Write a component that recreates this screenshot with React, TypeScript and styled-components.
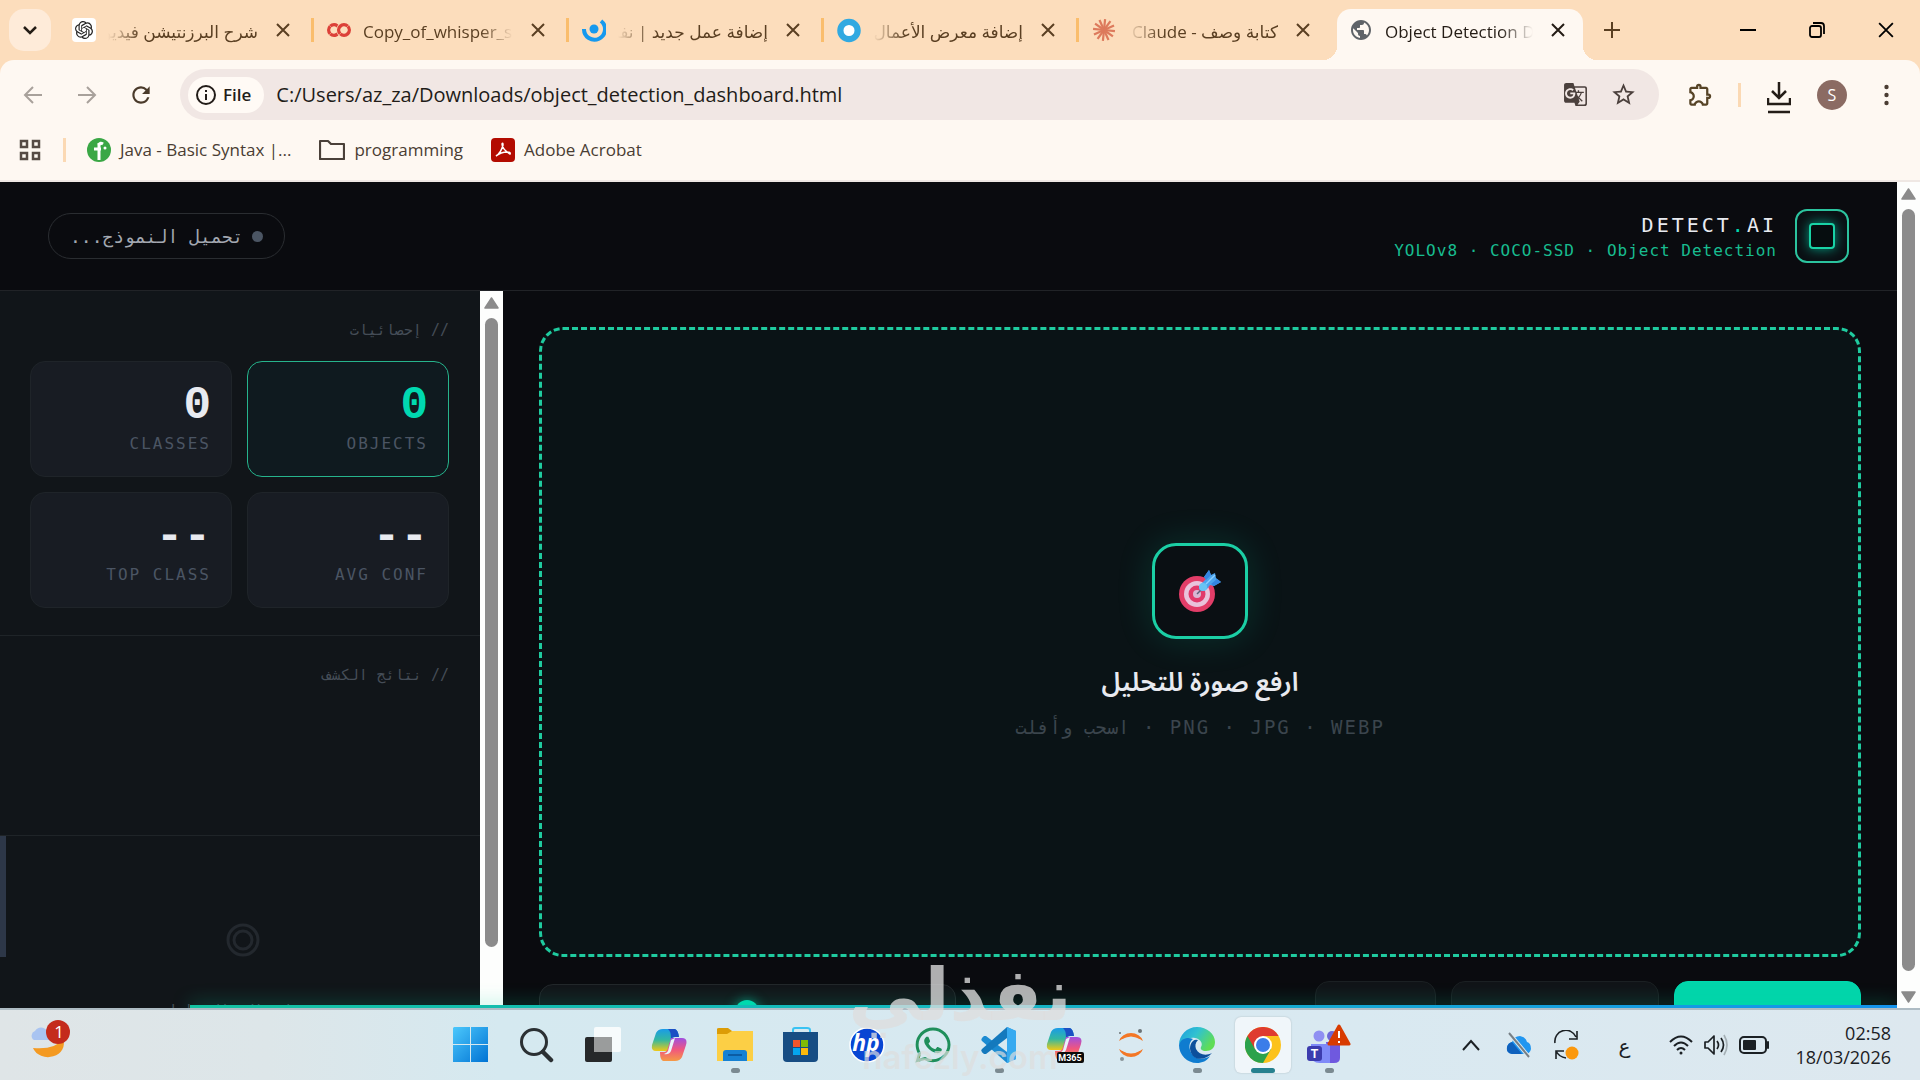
import React from 'react';
import styled, { createGlobalStyle, css } from 'styled-components';
import { SiOpenai, SiGooglecolab } from 'react-icons/si';
import { FaWhatsapp } from 'react-icons/fa';
import { MdGTranslate, MdStarBorder, MdOutlineExtension, MdPublic, MdRefresh } from 'react-icons/md';

const UI = '"Open Sans", "Noto Sans", "DejaVu Sans", sans-serif';
const MONO = '"DejaVu Sans Mono", "Liberation Mono", monospace';
const TEAL = '#00d9b0';

const GlobalStyle = createGlobalStyle`
  *, *::before, *::after { box-sizing: border-box; }
  body { margin: 0; font-family: ${UI}; overflow: hidden; }
  button { border: 0; padding: 0; background: none; font: inherit; color: inherit; cursor: pointer; }
  a { color: inherit; text-decoration: none; }
  h1, h2, p { margin: 0; font-weight: 400; }
  svg { display: block; flex: none; }
`;

const Screen = styled.div`
  height: 100vh;
  display: flex;
  flex-direction: column;
`;

/* ---------- browser chrome ---------- */

const TabStrip = styled.div`
  height: 60px;
  flex: none;
  display: flex;
  align-items: center;
  background: #fcddbc;
  padding-left: 9px;
`;

const TabSearch = styled.button`
  width: 42px;
  height: 42px;
  border-radius: 15px;
  background: #feebd9;
  display: grid;
  place-items: center;
  margin-right: 6px;
`;

const Tab = styled.div<{ $active?: boolean }>`
  width: 255px;
  height: 51px;
  align-self: flex-end;
  display: flex;
  align-items: center;
  padding: 0 19px 9px 15px;
  color: #5a3f22;
  position: relative;
  &::after {
    content: '';
    position: absolute;
    right: -2px;
    top: 9px;
    width: 3px;
    height: 24px;
    background: #fabd6c;
  }
  &:nth-last-child(4)::after { display: none; }
  ${p => p.$active && css`
    width: 246px;
    margin-left: 5px;
    padding: 0 15px 9px 12px;
    border-radius: 14px 14px 0 0;
    background: #fef8f2;
    color: #241c15;
    &::before, &::after {
      content: '';
      position: absolute;
      top: auto;
      bottom: 0;
      width: 14px;
      height: 14px;
      background: radial-gradient(circle at 0 0, transparent 14px, #fef8f2 14px);
    }
    &::before { left: -14px; }
    &::after { right: -14px; background: radial-gradient(circle at 100% 0, transparent 14px, #fef8f2 14px); }
  `}
`;

const TabTitle = styled.span<{ $rtl?: boolean }>`
  flex: 1;
  min-width: 0;
  margin: 0 15px 0 12px;
  padding-top: 3px;
  overflow: hidden;
  white-space: nowrap;
  font-size: 17px;
  line-height: 28px;
  direction: ${p => (p.$rtl ? 'rtl' : 'ltr')};
  mask-image: linear-gradient(${p => (p.$rtl ? 'to left' : 'to right')}, #000 78%, transparent);
`;

const Plain = styled.button`
  display: grid;
  place-items: center;
  flex: none;
`;

const NewTab = styled(Plain)`
  margin-left: 14px;
  width: 30px;
  height: 30px;
`;

const WindowControls = styled.div`
  margin-left: auto;
  display: flex;
  ${Plain} { width: 69px; height: 48px; }
`;

const ToolbarBack = styled.div`
  flex: none;
  background: #fcddbc;
`;

const Toolbar = styled.div`
  height: 69px;
  display: flex;
  align-items: center;
  background: #fef8f2;
  border-radius: 14px 14px 0 0;
  padding: 0 31px 0 18px;
`;

const NavButtons = styled.div`
  display: flex;
  gap: 24px;
  width: 162px;
  ${Plain} { width: 30px; height: 30px; }
`;

const Omnibox = styled.div`
  flex: 1;
  height: 51px;
  border-radius: 26px;
  background: #f1e7e4;
  display: flex;
  align-items: center;
  padding: 0 22px 0 8px;
  gap: 12px;
`;

const FileChip = styled.button`
  height: 36px;
  padding: 0 13px 0 8px;
  border-radius: 18px;
  background: #fffaf5;
  display: flex;
  align-items: center;
  gap: 7px;
  font-size: 17px;
  font-weight: 600;
  color: #221c18;
`;

const Url = styled.input`
  flex: 1;
  border: 0;
  outline: 0;
  padding: 0;
  background: transparent;
  font-family: ${UI};
  font-size: 20px;
  color: #221c18;
`;

const OmniIcons = styled.div`
  display: flex;
  gap: 22px;
  color: #4b403c;
`;

const Divider = styled.span`
  width: 3px;
  height: 24px;
  background: #fbd9b4;
`;

const ToolbarEnd = styled.div`
  display: flex;
  align-items: center;
  flex: none;
  margin-left: 28px;
  color: #564326;
  ${Divider} { margin: 0 26px 0 24px; }
`;

const DownloadButton = styled(Plain)`
  margin: 6px 26px 0 0;
`;

const Avatar = styled.button`
  width: 30px;
  height: 30px;
  border-radius: 50%;
  background: #8b6b63;
  color: #fff;
  font-size: 16px;
  margin-right: 37px;
`;

const Bookmarks = styled.nav`
  flex: none;
  height: 53px;
  background: #fef8f2;
  border-bottom: 2px solid #efe8e4;
  display: flex;
  align-items: center;
  padding: 0 19px 10px;
  color: #4a3d33;
  font-size: 17px;
  ${Divider} { margin: 0 21px 0 22px; }
`;

const Bookmark = styled.a`
  display: flex;
  align-items: center;
  gap: 9px;
  margin-right: 28px;
`;

/* ---------- web page ---------- */

const Viewport = styled.div`
  flex: 1;
  min-height: 0;
  display: flex;
`;

const Page = styled.div`
  flex: 1;
  min-width: 0;
  display: flex;
  flex-direction: column;
  position: relative;
  overflow: hidden;
  background: #0a0b0f;
  color: #e8eaf0;
  font-family: ${MONO};
`;

const Progress = styled.div`
  position: absolute;
  right: 0;
  bottom: 0;
  width: 90%;
  height: 3px;
  background: linear-gradient(to right, #13c2a1, #14b9bd 40%, #1493ec);
  box-shadow: 0 0 18px rgba(0, 217, 160, 0.75);
`;

const Header = styled.header`
  height: 109px;
  flex: none;
  padding: 0 48px;
  display: flex;
  align-items: center;
  justify-content: space-between;
  border-bottom: 1px solid #212327;
`;

const Brand = styled.div`
  display: flex;
  align-items: center;
  gap: 18px;
`;

const BrandText = styled.div`
  direction: ltr;
  text-align: right;
  padding-top: 4px;
`;

const BrandName = styled.h1`
  font-size: 20px;
  line-height: 26px;
  letter-spacing: 3px;
  b { font-weight: 400; color: ${TEAL}; }
`;

const BrandSub = styled.p`
  font-size: 16px;
  line-height: 26px;
  letter-spacing: 1px;
  color: #18bd90;
`;

const Logo = styled.span`
  width: 54px;
  height: 54px;
  border: 2px solid #2cc49f;
  border-radius: 12px;
  display: grid;
  place-items: center;
  background: #0a1014;
  &::after {
    content: '';
    width: 26px;
    height: 26px;
    border: 2px solid #19d3a6;
    border-radius: 4px;
    box-shadow: 0 0 12px rgba(0, 217, 176, 0.7);
    background: #060d0f;
  }
`;

const Status = styled.div`
  height: 46px;
  padding: 0 21px;
  border: 1px solid #2a2d31;
  border-radius: 23px;
  display: flex;
  align-items: center;
  gap: 9px;
  font-size: 18px;
  letter-spacing: 1px;
  color: #a3a8b1;
  &::before {
    content: '';
    width: 11px;
    height: 11px;
    border-radius: 50%;
    background: #4b5563;
  }
`;

const Body = styled.div`
  flex: 1;
  min-height: 0;
  display: flex;
`;

const Main = styled.main`
  flex: 1;
  min-width: 0;
  padding: 36px 36px 0;
  display: flex;
  flex-direction: column;
  gap: 24px;
`;

const DropZone = styled.button`
  flex: 1;
  border: 3px dashed #1fcb9f;
  border-radius: 24px;
  background: #0a1316;
  display: flex;
  flex-direction: column;
  align-items: center;
  justify-content: center;
`;

const DropIcon = styled.span`
  width: 96px;
  height: 96px;
  border: 3px solid #1bcfa5;
  border-radius: 24px;
  display: grid;
  place-items: center;
  background: #0a0f13;
  box-shadow: 0 0 36px rgba(0, 217, 176, 0.16);
`;

const DropTitle = styled.span`
  margin-top: 22px;
  font-family: "Noto Sans Arabic", "Noto Sans", "DejaVu Sans", sans-serif;
  font-size: 26px;
  font-weight: 600;
  line-height: 44px;
  color: #e8eaf0;
`;

const DropHint = styled.span`
  margin-top: 8px;
  font-size: 19px;
  line-height: 28px;
  letter-spacing: 2px;
  color: #3b454d;
`;

const ControlClip = styled.div`
  height: 27px;
  overflow: hidden;
`;

const Controls = styled.div`
  display: flex;
  align-items: center;
  gap: 15px;
`;

const ActionButton = styled.button<{ $primary?: boolean; $wide?: boolean }>`
  height: 62px;
  width: ${p => (p.$primary ? 187 : p.$wide ? 208 : 121)}px;
  border: 1px solid ${p => (p.$primary ? '#00d9b0' : '#1b2023')};
  border-radius: 14px;
  background: ${p => (p.$primary ? '#02d5ab' : '#111418')};
  color: ${p => (p.$primary ? '#0a0b0f' : '#8a9199')};
  font-size: 16px;
  line-height: 20px;
`;

const ThresholdPanel = styled.div`
  width: 417px;
  height: 56px;
  margin-right: auto;
  padding: 0 22px;
  border: 1px solid #23272b;
  border-radius: 14px;
  background: #121519;
  display: flex;
  align-items: center;
  gap: 20px;
  font-size: 14px;
  letter-spacing: 2px;
  color: #59636f;
`;

const Range = styled.input`
  appearance: none;
  width: 200px;
  height: 4px;
  margin: 0;
  border-radius: 2px;
  background: #2d3748;
  &::-webkit-slider-thumb {
    appearance: none;
    width: 24px;
    height: 24px;
    border-radius: 50%;
    background: ${TEAL};
    box-shadow: 0 0 12px rgba(0, 217, 176, 0.6);
  }
`;

const Sidebar = styled.aside`
  width: 503px;
  flex: none;
  display: flex;
  direction: ltr;
  overflow: hidden;
`;

const SideContent = styled.div`
  flex: 1;
  direction: rtl;
  background: #111519;
  display: flex;
  flex-direction: column;
  overflow: hidden;
`;

const Section = styled.section<{ $tall?: boolean }>`
  padding: 25px 31px 27px 30px;
  border-bottom: 1px solid #1f2428;
  flex: none;
  min-height: ${p => (p.$tall ? 200 : 0)}px;
`;

const SectionTitle = styled.h2`
  font-size: 15px;
  line-height: 28px;
  letter-spacing: 2px;
  color: #454d57;
`;

const StatGrid = styled.div`
  margin-top: 17px;
  display: grid;
  grid-template-columns: 1fr 1fr;
  gap: 15px;
`;

const Stat = styled.div<{ $active?: boolean }>`
  height: 116px;
  padding: 19px 20px 0;
  border: 1px solid ${p => (p.$active ? '#26b48c' : '#1f2429')};
  border-radius: 15px;
  background: ${p => (p.$active ? '#0f1a1f' : '#181c23')};
  direction: ltr;
  text-align: right;
  strong {
    display: block;
    font-family: "Liberation Mono", monospace;
    font-size: 46px;
    line-height: 51px;
    color: ${p => (p.$active ? TEAL : '#e8eaf0')};
  }
  span {
    display: block;
    font-size: 16px;
    line-height: 24px;
    letter-spacing: 2px;
    color: #4b5563;
  }
`;

const Empty = styled.div`
  flex: 1;
  display: flex;
  flex-direction: column;
  align-items: center;
  padding-top: 87px;
  gap: 44px;
  font-size: 15px;
  letter-spacing: 2px;
  color: #454d57;
  border-left: 6px solid transparent;
  border-image: linear-gradient(#2d3748 0 121px, transparent 121px) 1;
  border-image-width: 0 0 0 6px;
  white-space: nowrap;
`;

const ScrollTrack = styled.div`
  width: 23px;
  flex: none;
  background: #fdfefd;
  display: flex;
  flex-direction: column;
  align-items: center;
  padding-top: 6px;
`;

const ScrollThumb = styled.div`
  flex: 1;
  width: 13px;
  margin-top: 9px;
  border-radius: 7px;
  background: #8b8b8b;
`;

const ScrollEnd = styled.div<{ $size: number }>`
  height: ${p => p.$size}px;
  flex: none;
  display: flex;
  flex-direction: column;
  justify-content: flex-end;
  padding-bottom: 5px;
`;

/* ---------- taskbar ---------- */

const Taskbar = styled.footer`
  height: 72px;
  flex: none;
  display: flex;
  align-items: center;
  border-top: 2px solid #aebcc4;
  background: linear-gradient(to right, #dfe5e7, #dde6e9 14%, #d5e9f0 26%, #d9e9f1 70%, #dde8ef);
  color: #1b2024;
`;

const TaskLeft = styled.div`
  width: 438px;
  padding: 0 0 6px 29px;
`;

const TaskApp = styled.button<{ $active?: boolean; $run?: boolean }>`
  width: 56px;
  height: 56px;
  margin: 0 5px;
  border-radius: 6px;
  display: grid;
  place-items: center;
  position: relative;
  ${p => p.$active && 'background: #f0f6fa; box-shadow: 0 0 2px rgba(0,0,0,.2);'}
  &::after {
    content: '';
    position: absolute;
    bottom: 0;
    width: ${p => (p.$active ? 24 : p.$run ? 9 : 0)}px;
    height: 5px;
    border-radius: 3px;
    background: ${p => (p.$active ? '#27818f' : '#7b8a91')};
  }
`;

const Tray = styled.div`
  margin-left: auto;
  display: flex;
  align-items: center;
  padding-right: 29px;
`;

const TrayButton = styled(Plain)<{ $wide?: boolean }>`
  width: ${p => (p.$wide ? 66 : 48)}px;
  height: 56px;
  font-size: 20px;
`;

const Network = styled.button`
  display: flex;
  align-items: center;
  gap: 11px;
  margin: 0 25px 0 12px;
`;

const Clock = styled.button`
  text-align: right;
  font-size: 18px;
  line-height: 24px;
`;

const Watermark = styled.div`
  position: absolute;
  left: 852px;
  top: 951px;
  width: 216px;
  display: flex;
  flex-direction: column;
  align-items: center;
  pointer-events: none;
  color: rgba(222, 222, 222, 0.78);
  font-family: "DejaVu Sans", sans-serif;
  font-weight: 700;
  strong { font-size: 73px; line-height: 88px; }
  span { font-family: Inter, sans-serif; font-size: 33px; line-height: 36px; color: rgba(222, 222, 222, 0.7); font-weight: 600; }
`;

/* ---------- drawings ---------- */

const Cross = ({ size = 13, color = 'currentColor', w = 2 }: { size?: number; color?: string; w?: number }) => (
  <svg width={size} height={size} viewBox="0 0 14 14" stroke={color} strokeWidth={w} fill="none"><path d="M1 1L13 13M13 1L1 13" /></svg>
);

const Arrow = ({ back }: { back?: boolean }) => (
  <svg width="20" height="20" viewBox="0 0 20 20" fill="none" stroke="#a8a19b" strokeWidth="2">
    <path d={back ? 'M19 10H2M10 2L2 10L10 18' : 'M1 10H18M10 2L18 10L10 18'} />
  </svg>
);

const Triangle = ({ down }: { down?: boolean }) => (
  <svg width="15" height="12" viewBox="0 0 15 12"><path d={down ? 'M1 1H14L7.5 11Z' : 'M1 11H14L7.5 1Z'} fill="#8b8b8b" stroke="#8b8b8b" strokeWidth="1.5" strokeLinejoin="round" /></svg>
);

const SwirlIcon = () => (
  <svg width="24" height="27" viewBox="0 0 24 27"><circle cx="12" cy="12" r="4.500" fill="#1699ee" /><path d="M2 12A10.500 10.500 0 1 0 19 4" fill="none" stroke="#1699ee" strokeWidth="4" /></svg>
);
const RingIcon = () => (
  <svg width="24" height="25" viewBox="0 0 25 25"><circle cx="12.500" cy="12.500" r="9" fill="#fff" stroke="#31a9e1" strokeWidth="6.500" /></svg>
);
const Burst = () => (
  <svg width="24" height="24" viewBox="-12 -12 24 24" stroke="#dd7a5c" strokeWidth="2.200">
    {Array.from({ length: 12 }, (_, i) => {
      const a = (i * Math.PI) / 6 + 0.1;
      return <line key={i} x1="0" y1="0" x2={11 * Math.cos(a)} y2={11 * Math.sin(a)} />;
    })}
  </svg>
);
const OpenAiIcon = () => (
  <svg width="24" height="24" viewBox="0 0 24 24"><rect width="24" height="24" rx="4" fill="#fff" /><SiOpenai x="3" y="3" size={18} color="#222" /></svg>
);

const Target = () => (
  <svg width="42" height="44" viewBox="0 0 42 44">
    <circle cx="18" cy="25" r="18" fill="#e23d68" />
    <circle cx="18" cy="25" r="13" fill="#e9c3db" />
    <circle cx="18" cy="25" r="8.500" fill="#e2396a" />
    <circle cx="18" cy="25" r="4" fill="#d9b7d3" />
    <path d="M18 25L24 19" stroke="#5a5f79" strokeWidth="1.500" />
    <path d="M21 16L27 10L25 8L30 1L32 6L36 4L37 9L42 13L35 17L31 16L28 20C24 24 18 21 21 16Z" fill="#4ba3ee" />
    <path d="M25 8L30 1L32 6L27 11ZM42 13L35 17L32 15L38 10Z" fill="#3585e0" />
    <circle cx="24" cy="18" r="4" fill="#68c4f4" />
    <path d="M27 15L36 6" stroke="#8ad0ff" strokeWidth="1.500" />
  </svg>
);

const Weather = () => (
  <svg width="44" height="44" viewBox="0 0 44 44">
    <path d="M4 28A14 12 0 0 0 34 19Q26 30 4 28Z" fill="#f49a22" />
    <path d="M5 20a5 5 0 0 1 1-9 7 7 0 0 1 12 0 5 5 0 0 1 4 9Z" fill="#a9c4f1" />
    <circle cx="29" cy="12" r="12" fill="#c42b1c" />
    <text x="30" y="18" fontSize="17" fill="#fff" textAnchor="middle" fontFamily="Open Sans">1</text>
  </svg>
);
const Start = () => (
  <svg width="36" height="36" viewBox="0 0 36 36">
    <defs><linearGradient id="st" x1="0" y1="0" x2="1" y2="1"><stop stopColor="#4cc8fc" /><stop offset="1" stopColor="#0073d4" /></linearGradient></defs>
    <path d="M1 0h16v17H0V1zM18 0h17v17H18zM0 18h17v17H0zM18 18h17v17H18z" fill="url(#st)" />
  </svg>
);
const SearchIcon = () => (
  <svg width="34" height="36" viewBox="0 0 34 36" fill="none" stroke="#2b3033" strokeWidth="3"><circle cx="14" cy="15" r="12.500" /><path d="M23 25L31 33" strokeWidth="4.500" strokeLinecap="round" /></svg>
);
const TaskView = () => (
  <svg width="36" height="36" viewBox="0 0 36 36"><rect y="10" width="27" height="25" rx="2" fill="#26282a" /><rect x="9" width="27" height="25" rx="2" fill="#fff" opacity=".8" /><rect x="9" y="10" width="18" height="15" fill="#9a9c9c" /></svg>
);
const CopilotShape = () => (
  <g>
    <defs>
      <linearGradient id="c1" x1="0" y1="0" x2="0" y2="1"><stop stopColor="#1a9be8" /><stop offset=".5" stopColor="#34b8a0" /><stop offset="1" stopColor="#f0c916" /></linearGradient>
      <linearGradient id="c2" x1="0" y1="0" x2="0" y2="1"><stop stopColor="#a04fe0" /><stop offset=".5" stopColor="#f0567f" /><stop offset="1" stopColor="#f59a45" /></linearGradient>
    </defs>
    <path d="M12 2H24Q27 3 28 10H24Q21 10 20 14L17 24H5Q0 24 1 18L5 6Q7 2 12 2Z" fill="url(#c1)" />
    <path d="M17 2H24Q27 3 28 10H24Q21 10 20 12Q20 4 17 2Z" fill="#1c50c4" />
    <path d="M24 34H12Q9 33 9 25H13Q16 25 17 21L20 11H31Q37 11 35 18L31 30Q29 34 24 34Z" fill="url(#c2)" />
    <path d="M17 24L20 13L24 11L20 24Q18 28 13 27Q16 26 17 24Z" fill="#e8f3fa" />
  </g>
);
const Copilot = () => <svg width="36" height="36" viewBox="0 0 36 36"><CopilotShape /></svg>;
const M365 = () => (
  <svg width="38" height="38" viewBox="0 0 38 38"><CopilotShape /><rect x="11" y="26" width="27" height="11" rx="2" fill="#0b0b0b" /><text x="24" y="35" fontSize="9" fontWeight="700" fill="#fff" textAnchor="middle" fontFamily="Roboto">M365</text></svg>
);
const Explorer = () => (
  <svg width="37" height="36" viewBox="0 0 37 36"><path d="M0 2Q0 1 2 1H11L15 4V9H0Z" fill="#dc9c06" /><path d="M0 7H10L15 4H36V34H0Z" fill="#fccf45" /><path d="M6 34V26Q6 23 9 23H27Q30 23 30 26V34Z" fill="#1681d3" /><path d="M11 28H25" stroke="#0b5ca4" strokeWidth="2" /></svg>
);
const Store = () => (
  <svg width="36" height="36" viewBox="0 0 36 36"><path d="M10 8V3Q10 1 12 1H24Q27 1 27 3V8" fill="none" stroke="#39c3f3" strokeWidth="2" /><path d="M0 5H35V31Q35 35 31 35H4Q0 35 0 31Z" fill="#174d83" /><path d="M10 13h7v7h-7z" fill="#f2552b" /><path d="M18 13h7v7h-7z" fill="#80bc06" /><path d="M10 21h7v7h-7z" fill="#05a5ee" /><path d="M18 21h7v7h-7z" fill="#fdb90b" /></svg>
);
const Hp = () => (
  <svg width="36" height="36" viewBox="0 0 36 36"><circle cx="18" cy="18" r="17" fill="#0846d3" stroke="#fff" strokeWidth="1.500" /><text x="17" y="24" fontSize="23" fontWeight="700" fontStyle="italic" fill="#fff" textAnchor="middle" fontFamily="Open Sans">hp</text></svg>
);
const VsCode = () => (
  <svg width="36" height="36" viewBox="0 0 36 36"><path d="M26 0L35 4V32L26 36L1 14Q-1 12 3 9L5 9L26 25Z" fill="#1c8bd2" /><path d="M26 0V11L5 27L3 27Q-1 24 1 22Z" fill="#1479bd" /><path d="M26 0L35 4V32L26 36Z" fill="#37aaf0" /></svg>
);
const Jupyter = () => (
  <svg width="26" height="32" viewBox="0 0 26 32"><path d="M1 12A12.500 11 0 0 1 25 12A17 12 0 0 0 1 12Z" fill="#f37726" /><path d="M1 20A12.500 11 0 0 0 25 20A17 12 0 0 1 1 20Z" fill="#f37726" /><path d="M3 11Q13 4 23 11V21Q13 28 3 21Z" fill="#d9e9f1" /><circle cx="22" cy="2" r="2" fill="#6b7275" /><circle cx="2" cy="4" r="1" fill="#6b7275" /><circle cx="4" cy="30" r="2" fill="#899499" /></svg>
);
const Edge = () => (
  <svg width="36" height="36" viewBox="0 0 36 36">
    <defs><linearGradient id="ed" x1="0" y1="0" x2="1" y2=".5"><stop stopColor="#1a9cdf" /><stop offset=".5" stopColor="#31c2d0" /><stop offset="1" stopColor="#60dd55" /></linearGradient></defs>
    <path d="M0 18C0 8 8 0 18 0S36 7 36 15C36 21 32 24 27 24C23 24 21 22 22 20C24 17 22 12 16 11C9 10 2 14 0 18Z" fill="url(#ed)" />
    <path d="M0 18C2 11 9 10 14 12C10 15 9 21 13 27C17 33 25 33 31 29C28 34 23 36 18 36C8 36 0 28 0 18Z" fill="#0f7cd0" />
    <path d="M14 14C10 18 10 24 14 29C19 34 28 32 33 26C27 29 20 28 17 22C16 19 16 16 19 13Q16 12 14 14Z" fill="#0c4f9c" />
  </svg>
);
const Chrome = () => (
  <svg width="36" height="36" viewBox="0 0 36 36"><circle cx="18" cy="18" r="18" fill="#fcc21b" /><path d="M18 18L2.400 9A18 18 0 0 0 18 36L26 22Z" fill="#2ba24c" /><path d="M2.400 9A18 18 0 0 1 33.600 9H18L10 22Z" fill="#df3b30" /><circle cx="18" cy="18" r="9" fill="#fff" /><circle cx="18" cy="18" r="7" fill="#3b7de9" /></svg>
);
const Teams = () => (
  <svg width="44" height="42" viewBox="0 0 44 42"><circle cx="12" cy="12" r="5.500" fill="#8f8ff2" /><circle cx="25" cy="12" r="5" fill="#6d68d8" /><path d="M19 18H33V34Q33 39 27 39H22Z" fill="#6f59df" /><path d="M4 20H23V39H13Q4 39 4 30Z" fill="#7f8af8" /><rect y="22" width="15" height="15" rx="3" fill="#3c3cae" /><text x="7.500" y="34" fontSize="12" fontWeight="700" fill="#fff" textAnchor="middle" fontFamily="Inter">T</text><path d="M32 2L42 20H22Z" fill="#d83b01" stroke="#d83b01" strokeWidth="3" strokeLinejoin="round" /><path d="M32 7V14M32 17V19" stroke="#fff" strokeWidth="2" /></svg>
);

const line = { fill: 'none', stroke: '#1b2024', strokeWidth: 2 } as const;

const tabs = [
  { title: 'شرح البرزنتيشن فيديو', rtl: true, icon: <OpenAiIcon /> },
  { title: 'Copy_of_whisper_small', icon: <SiGooglecolab size={24} color="#dc4038" /> },
  { title: 'إضافة عمل جديد | نفذلي', rtl: true, icon: <SwirlIcon /> },
  { title: 'إضافة معرض الأعمال', rtl: true, icon: <RingIcon /> },
  { title: 'كتابة وصف - Claude', rtl: true, icon: <Burst /> },
  { title: 'Object Detection Dashboard', active: true, icon: <MdPublic size={24} color="#5f6368" /> },
];

const stats = [
  { value: '0', label: 'OBJECTS', active: true },
  { value: '0', label: 'CLASSES' },
  { value: '--', label: 'AVG CONF' },
  { value: '--', label: 'TOP CLASS' },
];

const apps = [
  { name: 'Start', icon: <Start /> },
  { name: 'Search', icon: <SearchIcon /> },
  { name: 'Task view', icon: <TaskView /> },
  { name: 'Copilot', icon: <Copilot /> },
  { name: 'File Explorer', icon: <Explorer />, run: true },
  { name: 'Store', icon: <Store /> },
  { name: 'HP', icon: <Hp /> },
  { name: 'WhatsApp', icon: <FaWhatsapp size={40} color="#1f8f5b" /> },
  { name: 'VS Code', icon: <VsCode />, run: true },
  { name: 'Microsoft 365', icon: <M365 /> },
  { name: 'Jupyter', icon: <Jupyter /> },
  { name: 'Edge', icon: <Edge />, run: true },
  { name: 'Chrome', icon: <Chrome />, active: true },
  { name: 'Teams', icon: <Teams />, run: true },
];

export default function App() {
  const [threshold, setThreshold] = React.useState(34);
  return (
    <Screen>
      <GlobalStyle />
      <TabStrip>
        <TabSearch aria-label="Search tabs">
          <svg width="14" height="10" viewBox="0 0 14 10" fill="none" stroke="#241c15" strokeWidth="2.500"><path d="M1 2L7 8L13 2" /></svg>
        </TabSearch>
        {tabs.map(t => (
          <Tab key={t.title} $active={t.active}>
            {t.icon}
            <TabTitle $rtl={t.rtl}>{t.title}</TabTitle>
            <Plain aria-label="Close tab"><svg width="20" height="20" viewBox="0 0 20 20" stroke="currentColor" strokeWidth="2"><path d="M4 4L16 16M16 4L4 16" /></svg></Plain>
          </Tab>
        ))}
        <NewTab aria-label="New tab"><svg width="16" height="16" viewBox="0 0 16 16" stroke="#5a3f22" strokeWidth="2"><path d="M8 0V16M0 8H16" /></svg></NewTab>
        <WindowControls>
          <Plain aria-label="Minimize"><svg width="16" height="2"><path d="M0 1H16" stroke="#000" strokeWidth="2" /></svg></Plain>
          <Plain aria-label="Restore"><svg width="16" height="16" viewBox="0 0 16 16" fill="none" stroke="#000" strokeWidth="1.800"><rect x="1" y="4" width="11" height="11" rx="2" /><path d="M4 1H12Q15 1 15 4V12" /></svg></Plain>
          <Plain aria-label="Close"><Cross size={16} color="#000" w={1.6} /></Plain>
        </WindowControls>
      </TabStrip>

      <ToolbarBack>
        <Toolbar>
          <NavButtons>
            <Plain aria-label="Back"><Arrow back /></Plain>
            <Plain aria-label="Forward"><Arrow /></Plain>
            <Plain aria-label="Reload"><MdRefresh size={26} color="#4a3a2a" /></Plain>
          </NavButtons>
          <Omnibox>
            <FileChip>
              <svg width="20" height="20" viewBox="0 0 20 20" fill="none" stroke="#221c18" strokeWidth="2"><circle cx="10" cy="10" r="9" /><path d="M10 9V15M10 5V7" /></svg>
              File
            </FileChip>
            <Url aria-label="Address" defaultValue="C:/Users/az_za/Downloads/object_detection_dashboard.html" />
            <OmniIcons>
              <Plain aria-label="Translate"><MdGTranslate size={25} /></Plain>
              <Plain aria-label="Bookmark"><MdStarBorder size={27} /></Plain>
            </OmniIcons>
          </Omnibox>
          <ToolbarEnd>
            <Plain aria-label="Extensions"><MdOutlineExtension size={27} /></Plain>
            <Divider />
            <DownloadButton aria-label="Downloads">
              <svg width="24" height="32" viewBox="0 0 24 32" fill="none" stroke="#241d18" strokeWidth="2.500"><path d="M12 0V15M5 9L12 16L19 9M1 16V22H23V16M1 30H23" /></svg>
            </DownloadButton>
            <Avatar>S</Avatar>
            <Plain aria-label="Menu"><svg width="5" height="22" viewBox="0 0 5 22" fill="#4a3d33"><circle cx="2.500" cy="3" r="2.200" /><circle cx="2.500" cy="11" r="2.200" /><circle cx="2.500" cy="19" r="2.200" /></svg></Plain>
          </ToolbarEnd>
        </Toolbar>
      </ToolbarBack>

      <Bookmarks>
        <Plain aria-label="Apps"><svg width="22" height="22" viewBox="0 0 22 22" fill="none" stroke="#564b45" strokeWidth="2.500"><path d="M2 2h6v6H2zM14 2h6v6h-6zM2 14h6v6H2zM14 14h6v6h-6z" /></svg></Plain>
        <Divider />
        <Bookmark href="#java">
          <svg width="24" height="24" viewBox="0 0 24 24"><circle cx="12" cy="12" r="12" fill="#3aa745" /><path d="M12 5V22M7 11H14" stroke="#fff" strokeWidth="3" fill="none" /><path d="M12 7Q13 4 16 6" stroke="#fff" strokeWidth="3" fill="none" /><circle cx="18" cy="10" r="1.500" fill="#fff" /></svg>
          Java - Basic Syntax |...
        </Bookmark>
        <Bookmark href="#programming">
          <svg width="26" height="22" viewBox="0 0 26 22" fill="none" stroke="#4a4039" strokeWidth="2.200"><path d="M1 2H9L12 5H25V20H1Z" strokeLinejoin="round" /></svg>
          programming
        </Bookmark>
        <Bookmark href="#acrobat">
          <svg width="24" height="24" viewBox="0 0 24 24"><rect width="24" height="24" rx="4" fill="#b30b00" /><path d="M5 18Q10 15 12 7Q12 4 11 6Q11 11 19 16Q20 14 16 14Q10 14 5 18Z" fill="none" stroke="#fff" strokeWidth="1.500" /></svg>
          Adobe Acrobat
        </Bookmark>
      </Bookmarks>

      <Viewport>
        <Page dir="rtl">
          <Header>
            <Brand>
              <Logo />
              <BrandText>
                <BrandName>DETECT<b>.</b>AI</BrandName>
                <BrandSub>YOLOv8 · COCO-SSD · Object Detection</BrandSub>
              </BrandText>
            </Brand>
            <Status>تحميل النموذج...</Status>
          </Header>
          <Body>
            <Main>
              <DropZone>
                <DropIcon><Target /></DropIcon>
                <DropTitle>ارفع صورة للتحليل</DropTitle>
                <DropHint>PNG · JPG · WEBP · اسحب وأفلت</DropHint>
              </DropZone>
              <ControlClip>
                <Controls>
                  <ActionButton $primary>تحليل</ActionButton>
                  <ActionButton $wide>حفظ النتيجة</ActionButton>
                  <ActionButton>مسح</ActionButton>
                  <ThresholdPanel>
                    <label htmlFor="threshold">THRESHOLD</label>
                    <Range id="threshold" type="range" min={0} max={100} value={threshold} onChange={e => setThreshold(Number(e.target.value))} />
                  </ThresholdPanel>
                </Controls>
              </ControlClip>
            </Main>
            <Sidebar>
              <SideContent>
                <Section>
                  <SectionTitle>// إحصائيات</SectionTitle>
                  <StatGrid>
                    {stats.map(s => (
                      <Stat key={s.label} $active={s.active}>
                        <strong>{s.value}</strong>
                        <span>{s.label}</span>
                      </Stat>
                    ))}
                  </StatGrid>
                </Section>
                <Section $tall>
                  <SectionTitle>// نتائج الكشف</SectionTitle>
                </Section>
                <Empty>
                  <svg width="34" height="34" viewBox="0 0 34 34" fill="none" stroke="#23282e" strokeWidth="3"><circle cx="17" cy="17" r="15" /><circle cx="17" cy="17" r="9" /></svg>
                  <p>في انتظار التحليل</p>
                </Empty>
              </SideContent>
              <ScrollTrack>
                <Triangle />
                <ScrollThumb />
                <ScrollEnd $size={61} />
              </ScrollTrack>
            </Sidebar>
          </Body>
          <Progress />
        </Page>
        <ScrollTrack>
          <Triangle />
          <ScrollThumb />
          <ScrollEnd $size={37}><Triangle down /></ScrollEnd>
        </ScrollTrack>
      </Viewport>

      <Taskbar>
        <TaskLeft><Plain aria-label="Weather"><Weather /></Plain></TaskLeft>
        {apps.map(a => (
          <TaskApp key={a.name} aria-label={a.name} $active={a.active} $run={a.run}>{a.icon}</TaskApp>
        ))}
        <Tray>
          <TrayButton aria-label="Hidden icons"><svg width="18" height="12" viewBox="0 0 18 12" {...line}><path d="M1 11L9 2L17 11" /></svg></TrayButton>
          <TrayButton aria-label="OneDrive">
            <svg width="26" height="26" viewBox="0 0 26 26"><path d="M6 22Q0 21 1 15Q2 11 6 10Q8 4 14 4Q20 5 21 10Q25 11 25 17Q24 22 19 22Z" fill="#2196f0" /><path d="M6 22Q0 21 1 15Q2 11 6 10L16 22Z" fill="#0f61bd" /><path d="M3 1L23 25" stroke="#dcebf2" strokeWidth="4" /><path d="M3 1L23 25" stroke="#777f85" strokeWidth="2" /></svg>
          </TrayButton>
          <TrayButton aria-label="Sync">
            <svg width="26" height="30" viewBox="0 0 26 30" {...line} strokeWidth={1.6}><path d="M1 13A11 11 0 0 1 22 7M23 1V9H15M2 29V21H10M2 21Q5 27 12 28" /><circle cx="18" cy="23" r="6.500" fill="#fb980d" stroke="none" /></svg>
          </TrayButton>
          <TrayButton $wide aria-label="Language">ع</TrayButton>
          <Network aria-label="Network, sound and battery">
            <svg width="24" height="21" viewBox="0 0 24 21" {...line}><path d="M1 7Q12 -4 23 7M5 11Q12 4 19 11M8 15Q12 11 16 15" /><circle cx="12" cy="18" r="1.500" fill="#1b2024" stroke="none" /></svg>
            <svg width="24" height="22" viewBox="0 0 24 22" {...line} strokeWidth={1.7}><path d="M1 8H4L10 2V20L4 14H1Z" strokeLinejoin="round" /><path d="M13 7Q16 11 13 15M17 4Q22 11 17 18" /><path d="M20 1Q26 11 20 21" stroke="#a5b0b6" /></svg>
            <svg width="31" height="18" viewBox="0 0 31 18" {...line}><rect x="1" y="1" width="26" height="16" rx="4" /><path d="M29 6V12" strokeLinecap="round" /><rect x="4" y="4" width="13" height="10" rx="1" fill="#1b2024" stroke="none" /></svg>
          </Network>
          <Clock>02:58<br />18/03/2026</Clock>
        </Tray>
      </Taskbar>

      <Watermark>
        <strong dir="rtl">نفذلي</strong>
        <span>nafezly.com</span>
      </Watermark>
    </Screen>
  );
}
